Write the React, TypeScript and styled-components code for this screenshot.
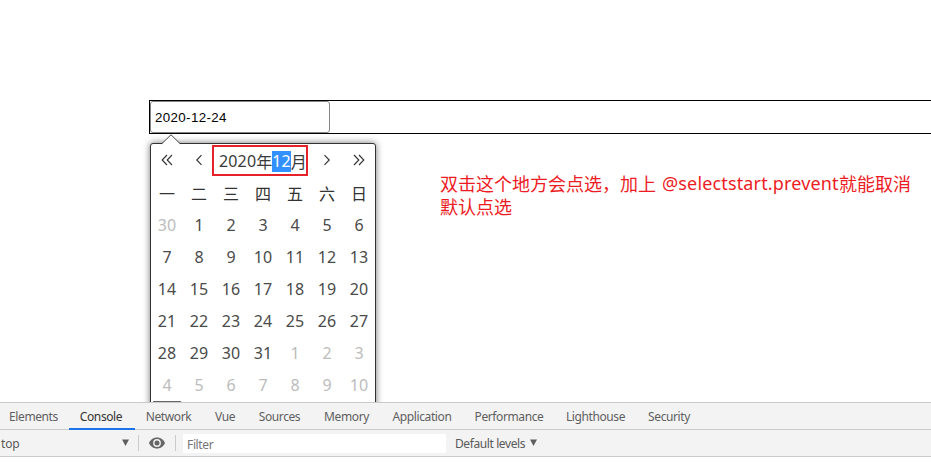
import React from "react";
import styled, { createGlobalStyle } from "styled-components";

const GlobalStyle = createGlobalStyle`
  * { box-sizing: border-box; }
  html, body { margin: 0; background: #fff; overflow: hidden; }
  body { font-family: "Noto Sans", "Noto Sans CJK SC", sans-serif; }
`;

const Screen = styled.div`
  height: 462px;
  display: flex;
  flex-direction: column;
  overflow: hidden;
`;

const Page = styled.main`
  position: relative;
  height: 402px;
  flex: none;
  padding: 100px 0 0 149px;
  overflow: hidden;
`;

const Field = styled.div`
  height: 34px;
  border: 1px solid #000;
  border-right: 0;
  display: flex;
`;

const DateInput = styled.input`
  width: 180px;
  height: 32px;
  padding: 1px 4px;
  border: 1px solid #858585;
  border-radius: 3px;
  outline: 0;
  color: #000;
  font: 13.33px "Liberation Sans", sans-serif;
  letter-spacing: 0.36px;
`;

const Popup = styled.section`
  position: absolute;
  left: 150px;
  top: 143px;
  width: 226px;
  height: 292px;
  border: 1px solid #333;
  border-radius: 3px;
  background: #fff;
  box-shadow: 0 0 7px rgba(0, 0, 0, 0.55);
`;

const Pointer = styled.svg`
  position: absolute;
  left: 10px;
  top: -10px;
`;

const Header = styled.header`
  height: 32px;
  display: grid;
  grid-template-columns: 32px 32px 96px 32px 32px;
`;

const NavButton = styled.button`
  display: flex;
  align-items: center;
  justify-content: center;
  padding: 0;
  border: 0;
  background: none;
  color: #333;
`;

const Title = styled.div`
  margin: 1px -1px 0 -3px;
  width: 96px;
  height: 31px;
  padding: 2px 0 0 5px;
  border: 2px solid #e6212a;
  display: flex;
  align-items: center;
  white-space: nowrap;
  font-size: 16px;
  line-height: 21px;
  letter-spacing: 0.15px;
  color: #3a3a3a;
`;

const Han = styled.span`
  font-family: "Noto Sans CJK SC", sans-serif;
  letter-spacing: 0;
`;

const Selected = styled.span`
  width: 19px;
  height: 21px;
  background: #3390ff;
  color: #fff;
`;

const Grid = styled.div`
  display: grid;
  grid-template-columns: repeat(7, 32px);
  grid-auto-rows: 32px;
`;

const Cell = styled.span<{ $muted?: boolean }>`
  display: flex;
  align-items: center;
  justify-content: center;
  padding-top: 1px;
  font-size: 16px;
  line-height: 22px;
  color: ${(p) => (p.$muted ? "#bcbcbc" : "#4a4a4a")};
`;

const Weekday = styled(Cell)`
  font-family: "Noto Sans CJK SC", sans-serif;
  color: #333;
`;

const TodayButton = styled.button`
  display: block;
  width: 30px;
  height: 24px;
  margin: 1px 0 0 1px;
  border: 1px solid #666;
  border-radius: 2px;
  background: #eee;
`;

const Note = styled.p`
  position: absolute;
  left: 440px;
  top: 171px;
  margin: 0;
  display: grid;
  grid-auto-rows: 23px;
  color: #ed1c24;
  font: 18px/20px "Noto Sans CJK SC", sans-serif;
  white-space: nowrap;
`;

const NoteLine = styled.span`
  display: flex;
  align-items: center;
`;

const Code = styled.span`
  width: 177px;
  margin-left: 6px;
  font-family: "Noto Sans", sans-serif;
  letter-spacing: 0.15px;
`;

const DevTools = styled.footer`
  height: 60px;
  flex: none;
  color: #5a5a5a;
  font-size: 12px;
`;

const Tabs = styled.nav`
  height: 28px;
  display: flex;
  background: #f3f3f3;
  border-top: 1px solid #cacaca;
  border-bottom: 1px solid #cacaca;
`;

const Tab = styled.span<{ $w: number; $active?: boolean }>`
  width: ${(p) => p.$w}px;
  height: 27px;
  display: flex;
  flex: none;
  align-items: center;
  justify-content: center;
  font-size: 12px;
  letter-spacing: -0.4px;
  padding: 2px 2px 0 0;
  color: ${(p) => (p.$active ? "#333" : "#5f5f5f")};
  border-bottom: 2px solid ${(p) => (p.$active ? "#1a73e8" : "transparent")};
`;

const Toolbar = styled.div`
  height: 27px;
  display: flex;
  align-items: center;
  background: #f3f3f3;
  border-bottom: 1px solid #cacaca;
`;

const Context = styled.div`
  width: 138px;
  display: flex;
  align-items: center;
  justify-content: space-between;
  padding: 0 9px 0 1px;
  letter-spacing: -0.15px;
`;

const Divider = styled.i`
  width: 1px;
  height: 16px;
  background: #cacaca;
`;

const EyeSlot = styled.div`
  width: 36px;
  display: flex;
  justify-content: center;
`;

const Filter = styled.div`
  width: 263px;
  height: 19px;
  margin-left: 7px;
  padding: 2px 0 0 4px;
  background: #fff;
  color: #757575;
  line-height: 18px;
  letter-spacing: -0.35px;
`;

const Levels = styled.div`
  display: flex;
  align-items: center;
  gap: 5px;
  margin-left: 9px;
  letter-spacing: -0.4px;
`;

const Chevron = ({ double, right }: { double?: boolean; right?: boolean }) => (
  <svg width="14" height="14" viewBox="0 0 14 14" fill="none" stroke="currentColor" strokeWidth="1.15">
    <g transform={right ? "translate(14 0) scale(-1 1)" : undefined}>
      {double ? <path d="M7 2 2.200 7 7 12M12 2 7.200 7 12 12" /> : <path d="M9.500 2.200 4.800 7l4.700 4.800" />}
    </g>
  </svg>
);

const Caret = () => (
  <svg width="7" height="8" viewBox="0 0 7 8">
    <path d="M0 0.500h7L3.500 7z" fill="#5f5f5f" />
  </svg>
);

const weekdays = ["一", "二", "三", "四", "五", "六", "日"];
const days = [30, ...Array.from({ length: 31 }, (_, i) => i + 1), ...Array.from({ length: 10 }, (_, i) => i + 1)];
const tabs: [string, number][] = [
  ["Elements", 69], ["Console", 66], ["Network", 69], ["Vue", 44], ["Sources", 65], ["Memory", 69],
  ["Application", 82], ["Performance", 92], ["Lighthouse", 81], ["Security", 66],
];

export default function App() {
  return (
    <Screen>
      <GlobalStyle />
      <Page>
        <Field>
          <DateInput readOnly value="2020-12-24" />
        </Field>
        <Popup>
          <Pointer width="20" height="11" viewBox="0 0 20 11">
            <path d="M0.800 10 10 0.800 19.200 10V11H0.800z" fill="#fff" />
            <path d="M0.800 9.700 10 0.800l9.200 8.900" fill="none" stroke="#444" strokeWidth="1" />
          </Pointer>
          <Header>
            <NavButton><Chevron double /></NavButton>
            <NavButton><Chevron /></NavButton>
            <Title>
              2020<Han>年</Han><Selected>12</Selected><Han>月</Han>
            </Title>
            <NavButton><Chevron right /></NavButton>
            <NavButton><Chevron double right /></NavButton>
          </Header>
          <Grid>
            {weekdays.map((d) => <Weekday key={d}>{d}</Weekday>)}
            {days.map((d, i) => <Cell key={i} $muted={i < 1 || i > 31}>{d}</Cell>)}
          </Grid>
          <TodayButton />
        </Popup>
        <Note>
          <NoteLine>双击这个地方会点选，加上<Code>@selectstart.prevent</Code>就能取消</NoteLine>
          <NoteLine>默认点选</NoteLine>
        </Note>
      </Page>
      <DevTools>
        <Tabs>
          {tabs.map(([name, w]) => <Tab key={name} $w={w} $active={name === "Console"}>{name}</Tab>)}
        </Tabs>
        <Toolbar>
          <Context>top<Caret /></Context>
          <Divider />
          <EyeSlot>
            <svg width="16" height="12" viewBox="0 0 16 12">
              <path d="M8 0.500C4.400 0.500 1.400 2.700 0 6c1.400 3.300 4.400 5.500 8 5.500s6.600-2.200 8-5.500C14.600 2.700 11.600 0.500 8 0.500z" fill="#666" />
              <circle cx="8" cy="6" r="3.200" fill="none" stroke="#f3f3f3" strokeWidth="1.400" />
            </svg>
          </EyeSlot>
          <Divider />
          <Filter>Filter</Filter>
          <Levels>Default levels<Caret /></Levels>
        </Toolbar>
      </DevTools>
    </Screen>
  );
}
